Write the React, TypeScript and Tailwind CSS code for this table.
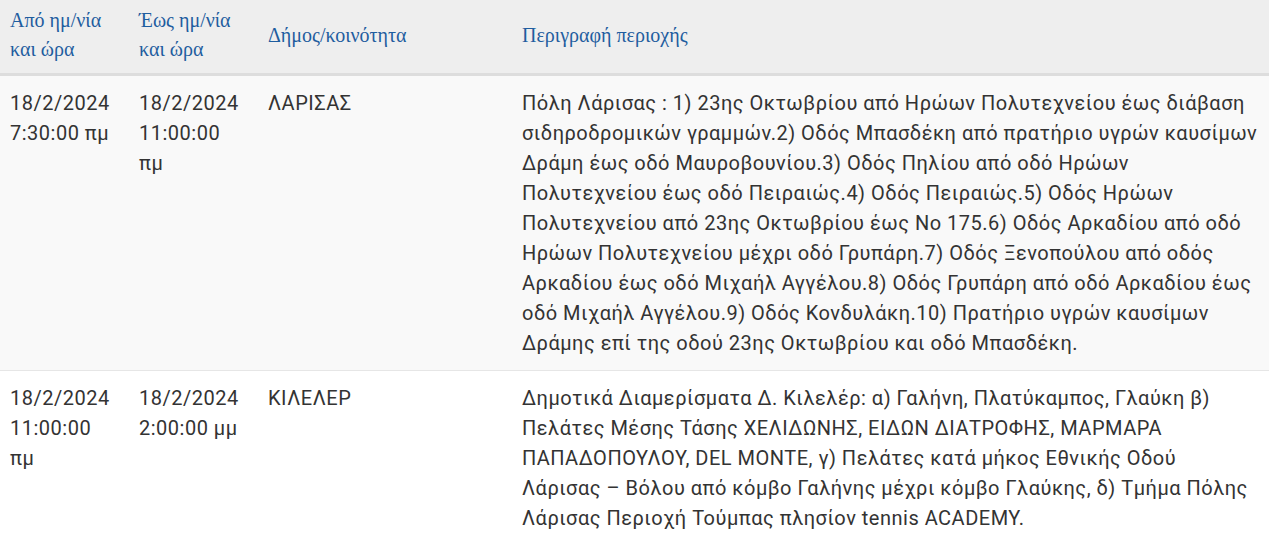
import React from "react";

const rows = [
  {
    from: ["18/2/2024", "7:30:00 πμ"],
    to: ["18/2/2024", "11:00:00", "πμ"],
    area: "ΛΑΡΙΣΑΣ",
    desc: [
      "Πόλη Λάρισας : 1) 23ης Οκτωβρίου από Ηρώων Πολυτεχνείου έως διάβαση",
      "σιδηροδρομικών γραμμών.2) Οδός Μπασδέκη από πρατήριο υγρών καυσίμων",
      "Δράμη έως οδό Μαυροβουνίου.3) Οδός Πηλίου από οδό Ηρώων",
      "Πολυτεχνείου έως οδό Πειραιώς.4) Οδός Πειραιώς.5) Οδός Ηρώων",
      "Πολυτεχνείου από 23ης Οκτωβρίου έως Νο 175.6) Οδός Αρκαδίου από οδό",
      "Ηρώων Πολυτεχνείου μέχρι οδό Γρυπάρη.7) Οδός Ξενοπούλου από οδός",
      "Αρκαδίου έως οδό Μιχαήλ Αγγέλου.8) Οδός Γρυπάρη από οδό Αρκαδίου έως",
      "οδό Μιχαήλ Αγγέλου.9) Οδός Κονδυλάκη.10) Πρατήριο υγρών καυσίμων",
      "Δράμης επί της οδού 23ης Οκτωβρίου και οδό Μπασδέκη.",
    ],
  },
  {
    from: ["18/2/2024", "11:00:00", "πμ"],
    to: ["18/2/2024", "2:00:00 μμ"],
    area: "ΚΙΛΕΛΕΡ",
    desc: [
      "Δημοτικά Διαμερίσματα Δ. Κιλελέρ: α) Γαλήνη, Πλατύκαμπος, Γλαύκη β)",
      "Πελάτες Μέσης Τάσης ΧΕΛΙΔΩΝΗΣ, ΕΙΔΩΝ ΔΙΑΤΡΟΦΗΣ, ΜΑΡΜΑΡΑ",
      "ΠΑΠΑΔΟΠΟΥΛΟΥ, DEL MONTE, γ) Πελάτες κατά μήκος Εθνικής Οδού",
      "Λάρισας – Βόλου από κόμβο Γαλήνης μέχρι κόμβο Γλαύκης, δ) Τμήμα Πόλης",
      "Λάρισας Περιοχή Τούμπας πλησίον tennis ACADEMY.",
    ],
  },
];

function Lines({ lines }: { lines: string[] }) {
  return (
    <>
      {lines.map((l, i) => (
        <span key={i} className="block whitespace-nowrap">
          {l}
        </span>
      ))}
    </>
  );
}

export default function App() {
  return (
    <div className="w-[1269px] h-[545px] overflow-hidden bg-white">
      <table className="w-full table-fixed border-collapse">
        <colgroup>
          <col className="w-[129px]" />
          <col className="w-[129px]" />
          <col className="w-[254px]" />
          <col />
        </colgroup>
        <thead>
          <tr className="bg-[#eeeeee] border-b-[3px] border-[#dddddd] text-[#1f5d9f] text-[20px] leading-[29px] font-['Liberation_Serif',serif] font-normal text-left">
            <th className="px-[10px] pt-[6px] pb-[9px] align-middle font-normal">Από ημ/νία<br />και ώρα</th>
            <th className="px-[10px] pt-[6px] pb-[9px] align-middle font-normal">Έως ημ/νία<br />και ώρα</th>
            <th className="px-[10px] pt-[6px] pb-[9px] align-middle font-normal">Δήμος/κοινότητα</th>
            <th className="px-[10px] pt-[6px] pb-[9px] align-middle font-normal">Περιγραφή περιοχής</th>
          </tr>
        </thead>
        <tbody className="font-['Roboto',sans-serif] text-[20px] leading-[30px] tracking-[0.5px] text-[#333333]">
          {rows.map((r, i) => (
            <tr key={i} className={i % 2 === 0 ? "bg-[#f9f9f9] border-b border-[#e6e6e6]" : "bg-white"}>
              <td className="px-[10px] py-[12px] align-top"><Lines lines={r.from} /></td>
              <td className="px-[10px] py-[12px] align-top"><Lines lines={r.to} /></td>
              <td className="px-[10px] py-[12px] align-top">{r.area}</td>
              <td className="px-[10px] py-[12px] align-top"><Lines lines={r.desc} /></td>
            </tr>
          ))}
        </tbody>
      </table>
    </div>
  );
}
